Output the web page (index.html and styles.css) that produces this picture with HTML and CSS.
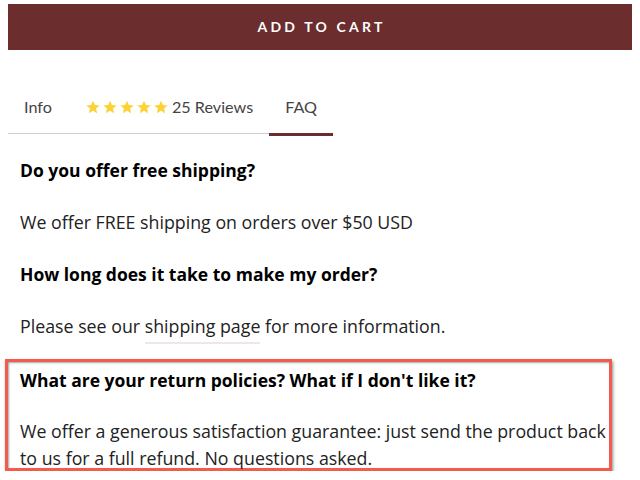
FILE: index.html
```html
<!DOCTYPE html>
<html>
<head>
<meta charset="utf-8">
<link rel="stylesheet" href="styles.css">
</head>
<body>
<div class="page">
  <button class="cart-btn">ADD TO CART</button>
  <nav class="tabs">
    <span class="tab">Info</span>
    <span class="tab reviews">
      <span class="stars">
        <svg viewBox="0 0 24 24"><path d="M12 2.5l2.9 6.6 7.1.6-5.4 4.7 1.6 7-6.2-3.7-6.2 3.7 1.6-7L2 9.7l7.1-.6z"/></svg>
        <svg viewBox="0 0 24 24"><path d="M12 2.5l2.9 6.6 7.1.6-5.4 4.7 1.6 7-6.2-3.7-6.2 3.7 1.6-7L2 9.7l7.1-.6z"/></svg>
        <svg viewBox="0 0 24 24"><path d="M12 2.5l2.9 6.6 7.1.6-5.4 4.7 1.6 7-6.2-3.7-6.2 3.7 1.6-7L2 9.7l7.1-.6z"/></svg>
        <svg viewBox="0 0 24 24"><path d="M12 2.5l2.9 6.6 7.1.6-5.4 4.7 1.6 7-6.2-3.7-6.2 3.7 1.6-7L2 9.7l7.1-.6z"/></svg>
        <svg viewBox="0 0 24 24"><path d="M12 2.5l2.9 6.6 7.1.6-5.4 4.7 1.6 7-6.2-3.7-6.2 3.7 1.6-7L2 9.7l7.1-.6z"/></svg>
      </span>
      25 Reviews
    </span>
    <span class="tab active">FAQ</span>
  </nav>
  <div class="faq">
    <div class="faq-item">
      <p class="q">Do you offer free shipping?</p>
      <p class="a">We offer FREE shipping on orders over $50 USD</p>
    </div>
    <div class="faq-item">
      <p class="q">How long does it take to make my order?</p>
      <p class="a">Please see our <a class="link" href="#">shipping page</a> for more information.</p>
    </div>
    <div class="faq-item highlight">
      <p class="q">What are your return policies? What if I don't like it?</p>
      <p class="a">We offer a generous satisfaction guarantee: just send the product back to us for a full refund. No questions asked.</p>
    </div>
  </div>
</div>
</body>
</html>
```

FILE: styles.css
```css
* { box-sizing: border-box; }
html, body { margin: 0; padding: 0; background: #fff; }
body {
  font-family: "Open Sans", "Liberation Sans", sans-serif;
  color: #111;
}
.page {
  padding: 4px 8px 0 8px;
}
.cart-btn {
  display: block;
  width: 624px;
  height: 46px;
  border: 0;
  margin: 0;
  background: #6b2d2d;
  color: #fff;
  font-family: "Lato", sans-serif;
  font-weight: 700;
  font-size: 14px;
  letter-spacing: 3.2px;
  padding: 0 0 2px 3px;
}
.tabs {
  display: flex;
  width: 624px;
  margin-top: 36px;
  background: linear-gradient(#cfcfcf, #cfcfcf) no-repeat;
  background-size: 262px 1px;
  background-position: 0 47px;
}
.tab {
  display: flex;
  align-items: center;
  height: 50px;
  padding: 0 16px 6px;
  font-family: "Lato", sans-serif;
  font-size: 16.2px;
  color: #444;
  border-bottom: 3px solid transparent;
}
.tab.reviews { padding-left: 17px; padding-right: 16px; }
.tab.active { border-bottom-color: #6b2d2d; }
.stars { display: inline-flex; gap: 1px; margin-right: 3px; }
.stars svg { width: 16px; height: 16px; fill: #fcd337; }
.faq { padding: 0 12px; }
.q {
  font-weight: 700;
  font-size: 17.5px;
  margin: 0;
  line-height: 27px;
  color: #000;
}
.a {
  font-size: 17.8px;
  margin: 0;
  line-height: 27px;
  color: #222;
}
.faq-item { padding-top: 25px; }
.faq-item:first-child { padding-top: 21px; }
.faq-item .a { margin-top: 25px; }
.link {
  color: inherit;
  text-decoration: none;
  border-bottom: 2px solid #efe6e9;
  padding-bottom: 4px;
}
.highlight {
  margin: 19px 8px 0 -15px;
  padding: 5px 0 0 12px;
  border: 3px solid #f35b4e;
  box-shadow: 1px 2px 3px rgba(0,0,0,0.45), inset 1px 1px 2px rgba(0,0,0,0.35);
}
.highlight .a { margin-top: 24px; margin-bottom: -4px; }
```
